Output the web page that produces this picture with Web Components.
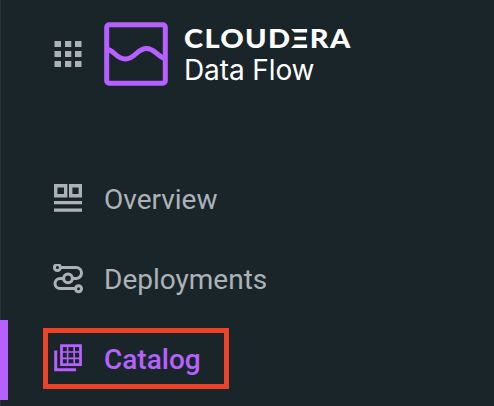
<!DOCTYPE html>
<html lang="en"><head><meta charset="utf-8"><title>Cloudera Data Flow</title>
<style>
html,body{margin:0;height:100%;background:#1a252a;overflow:hidden}
</style></head><body>
<flow-sidebar></flow-sidebar>
<script>
const define=(name,html)=>customElements.define(name,class extends HTMLElement{
  constructor(){super();const t=document.createElement('template');t.innerHTML=html;
    this.attachShadow({mode:'open'}).append(t.content.cloneNode(true));}
});

define('app-brand',`<style>
:host{display:flex;height:160px;box-sizing:border-box;padding:22px 0 0 53px;color:#fff}
svg{display:block;flex:none}
.apps{margin-top:18px}.mark{margin-left:22px}
.words{margin-left:16px;white-space:nowrap}
.name{font:900 26px/32px Lato,sans-serif;letter-spacing:1.2px;transform:scaleX(1.115);transform-origin:0 0}
.product{font:400 28px/32px Inter,sans-serif;letter-spacing:-.1px}
.e{display:inline-block;position:relative;width:16.5px;color:transparent}
.e svg{position:absolute;left:0;top:6.5px}
</style>
<svg class="apps" width="29" height="29" fill="#adb2b8"><path d="M1.5 1h6.5v6H1.5zM12 1h6.3v6H12zM22 1h6.5v6H22zM1.5 11h6.5v6H1.5zM12 11h6.3v6H12zM22 11h6.5v6H22zM1.5 21h6.5v6H1.5zM12 21h6.3v6H12zM22 21h6.5v6H22z"/></svg>
<svg class="mark" width="64" height="64" fill="none" stroke="#b660ff" stroke-width="5"><rect x="2.7" y="2.7" width="58.6" height="58.6" rx="2.5"/><path d="M3 27.5C10 27.5 12 37 21.5 37C31 37 33 26.5 42.5 26.5C51 26.5 53 34.5 61 36.5"/></svg>
<div class="words"><div class="name">CLOUD<span class="e">E<svg width="15" height="20" fill="#fff"><path d="M0 0h14.5v3.6H3zM3 7.7h10.5v3.6H3zM3 15.4h11.5V19H0z"/></svg></span>RA</div><div class="product">Data Flow</div></div>`);

define('nav-item',`<style>
:host{display:flex;height:80px;align-items:center;box-sizing:border-box;padding-left:53px;color:#adb2b8;font:400 28px/34px Roboto,sans-serif;letter-spacing:0}
:host([active]){color:#b660ff;font-weight:500;box-shadow:inset 8px 0 #b660ff}
::slotted(svg){display:block;flex:none;margin-right:20px}
</style><slot name="icon"></slot><span><slot></slot></span>`);

define('focus-frame',`<style>:host{position:absolute;left:43px;top:328px;width:186px;height:61px;box-sizing:border-box;border:5px solid #e9432a}</style>`);

define('flow-sidebar',`<style>:host{display:block;position:relative;width:494px;height:406px;background:#1a252a;box-shadow:inset 1px 0 #2a3439}</style>
<app-brand></app-brand>
<nav>
<nav-item><svg slot="icon" width="31" height="32" fill="none" stroke="currentColor"><path d="M2.7 1.7h10v10h-10zM17.7 1.7h9.6v10h-9.6z" stroke-width="3.4"/><path d="M1 18.6h28M1 26.2h28" stroke-width="3.2"/></svg>Overview</nav-item>
<nav-item><svg slot="icon" width="31" height="32" fill="none" stroke="currentColor" stroke-width="3"><circle cx="4.4" cy="3.5" r="3"/><path d="M7.5 3.5H23a5.5 5.5 0 0 1 0 11h-3.5M10.5 14.5H7a5 5 0 0 0 0 10H22"/><circle cx="15" cy="14.3" r="4.4"/><circle cx="25.5" cy="24.7" r="3"/></svg>Deployments</nav-item>
<nav-item active><svg slot="icon" width="31" height="32" fill="none" stroke="currentColor"><path d="M8.5 1.7h19v19h-19z" stroke-width="2.8"/><path d="M14.6 1v20M21.2 1v20M8 8h20M8 14.4h20" stroke-width="1.6"/><path d="M2.7 6.5v19.3H23" stroke-width="3"/></svg>Catalog</nav-item>
</nav>
<focus-frame></focus-frame>`);
</script></body></html>
